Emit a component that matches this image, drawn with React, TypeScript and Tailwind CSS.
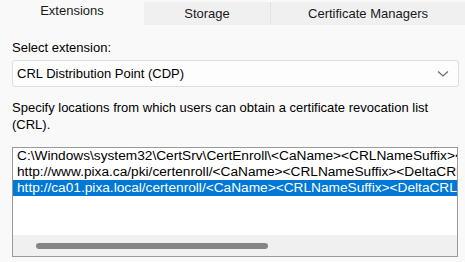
import React from 'react';

const rows = [
  'C:\\Windows\\system32\\CertSrv\\CertEnroll\\<CaName><CRLNameSuffix><DeltaCRLAllowed>.crl',
  'http://www.pixa.ca/pki/certenroll/<CaName><CRLNameSuffix><DeltaCRLAllowed>.crl',
  'http://ca01.pixa.local/certenroll/<CaName><CRLNameSuffix><DeltaCRLAllowed>.crl',
];

export default function App() {
  return (
    <div className="h-[262px] w-[465px] overflow-hidden bg-[#f9f9f9] text-[13px] text-black font-['Liberation_Sans',Arial,sans-serif]">
      {/* Tabs */}
      <div className="flex h-[25px]">
        <div className="flex w-[144px] justify-center pt-[3px] leading-[16px] text-[#1a1a1a]">Extensions</div>
        <div className="mt-[2px] flex w-[126px] justify-center bg-[#f0f0f0] pt-[4px] leading-[16px] text-[#1a1a1a]">Storage</div>
        <div className="mt-[2px] flex flex-1 justify-center border-l border-[#e3e3e3] bg-[#f0f0f0] pt-[4px] leading-[16px] text-[#1a1a1a]">
          Certificate Managers
        </div>
      </div>

      <div className="flex flex-col px-[12px]">
        <div className="mt-[15px] leading-[16px]">Select extension:</div>

        {/* Combo */}
        <div className="mt-[4px] flex h-[27px] w-[447px] items-center justify-between rounded-[3px] border border-[#dedede] bg-[#fdfdfd] pl-[4px] pr-[9px]">
          <span className="leading-[16px]">CRL Distribution Point (CDP)</span>
          <svg width="12" height="8" viewBox="0 0 12 8" fill="none">
            <path d="M1 1.5 L6 6 L11 1.5" stroke="#6b6b6b" strokeWidth="1.2" />
          </svg>
        </div>

        <div className="mt-[12px] leading-[17px]">
          Specify locations from which users can obtain a certificate revocation list (CRL).
        </div>

        {/* List box */}
        <div className="mt-[14px] flex h-[110px] w-[446px] flex-col border border-[#9a9a9a] bg-white">
          <div className="flex flex-col overflow-hidden text-[13.7px]">
            {rows.map((r, i) => (
              <div
                key={i}
                className={
                  i === 2
                    ? 'h-[16px] whitespace-nowrap bg-[#0078d7] pl-[4px] leading-[16px] text-white'
                    : 'h-[16px] whitespace-nowrap pl-[4px] leading-[16px]'
                }
              >
                {r}
              </div>
            ))}
          </div>
          <div className="flex-1" />
          <div className="flex h-[21px] items-center bg-[#f0f0f0] pl-[23px]">
            <div className="h-[6px] w-[232px] rounded-full bg-[#858585]" />
          </div>
        </div>
      </div>
    </div>
  );
}
